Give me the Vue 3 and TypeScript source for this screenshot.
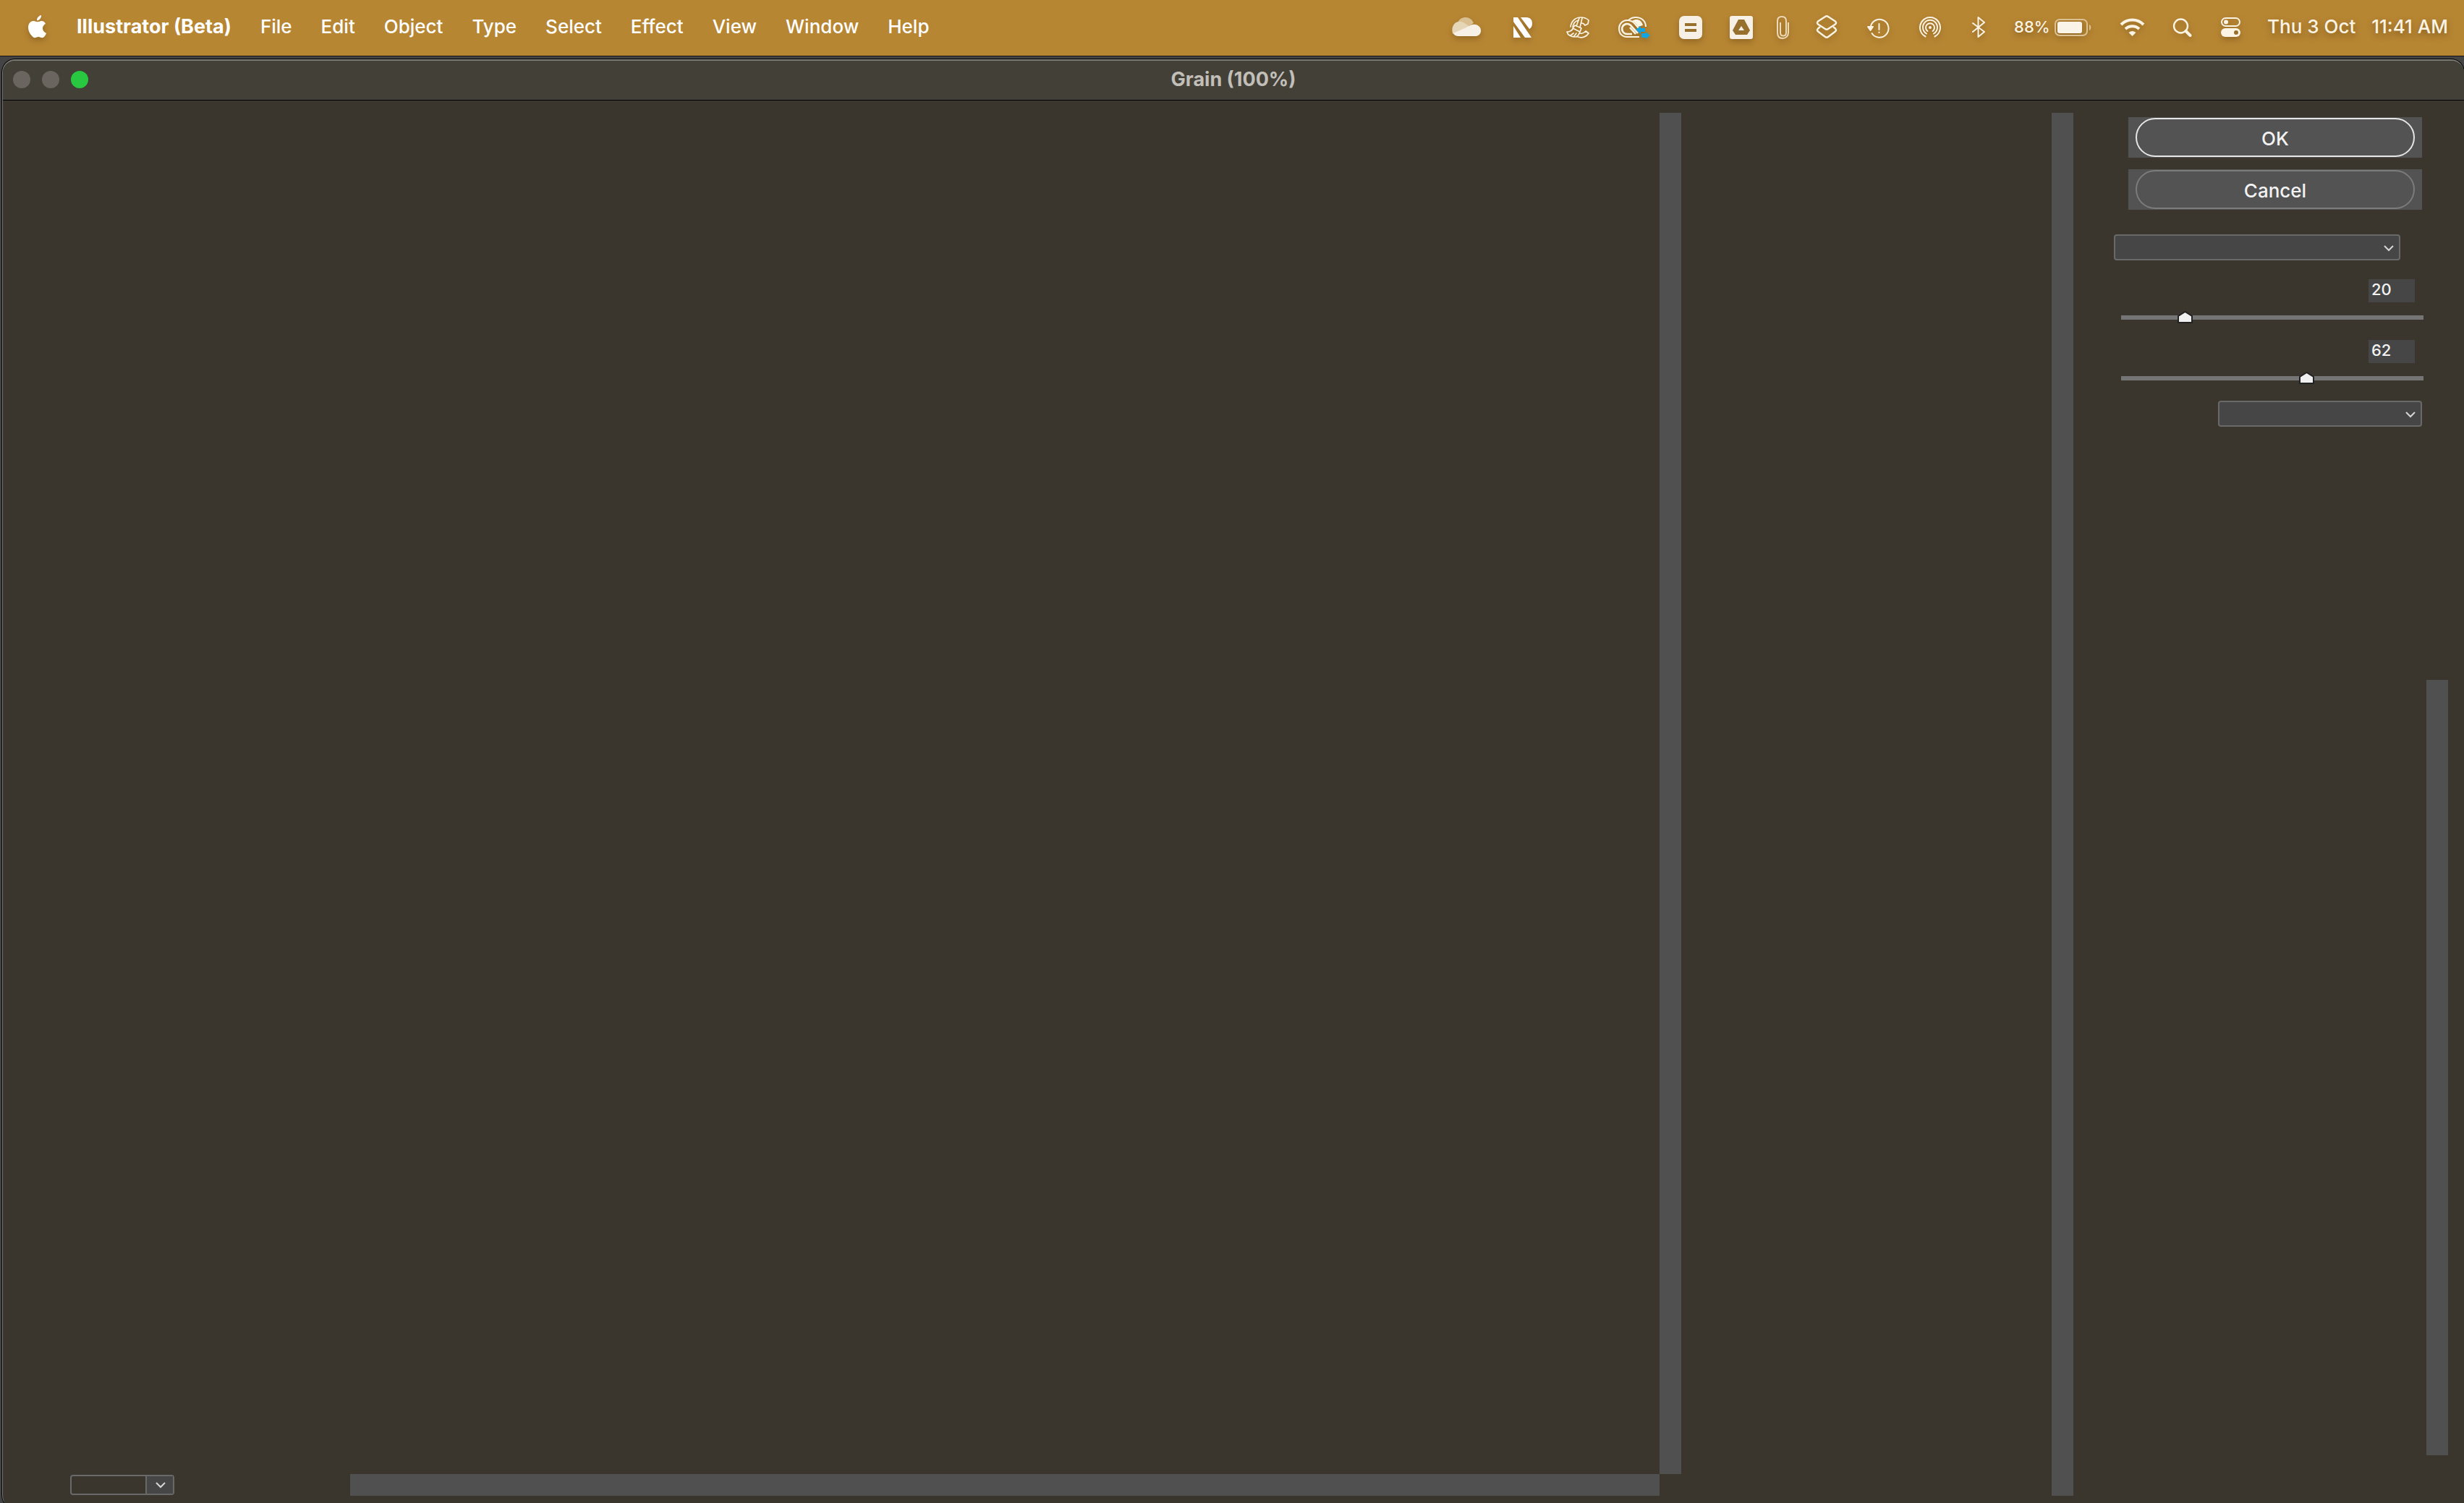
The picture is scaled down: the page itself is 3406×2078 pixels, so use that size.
<script setup lang="ts">
import { ref } from 'vue'

interface Slider {
  name: string
  value: number
}

const menus: string[] = ['File', 'Edit', 'Object', 'Type', 'Select', 'Effect', 'View', 'Window', 'Help']
const sliders = ref<Slider[]>([
  { name: 'Intensity', value: 20 },
  { name: 'Contrast', value: 62 },
])
</script>

<template>
  <div class="desktop">
    <header class="menubar">
      <nav class="menus">
        <button class="menu apple" aria-label="Apple menu">
          <svg width="28" height="40" viewBox="0 0 28 40" fill="currentColor">
            <path d="M19 4c.3 3.800-2.600 7.300-6 7.500C12.600 8 15.600 4.600 19 4z" />
            <path d="M25 15.800c-3 1.900-4.600 4.600-3.900 7.800.5 2.300 2 4 4.900 5.300-1 2.500-2.200 4.300-3.600 5.500-1.600 1.200-3.200.9-4.800.2-1.700-.8-3.300-.8-5 0-2 .9-3.600.9-5.200-.6C3.500 30.600 1.200 26.400 1 21.500c-.2-5.700 3-9.300 7.200-9.500 2.200-.1 3.900 1.300 5.500 1.300 1.700 0 3.600-1.500 6-1.300 2.300.1 4.100 1.300 5.300 3.800z" />
          </svg>
        </button>
        <button class="menu app-name">Illustrator (Beta)</button>
        <button v-for="menu in menus" :key="menu" class="menu">{{ menu }}</button>
      </nav>

      <div class="status">
        <!-- cloud storage -->
        <svg width="48" height="40" viewBox="0 0 48 40">
          <path d="M12 14C14 9.500 18 7 23 7c5 0 9 3 11 8l-8 5-14-6z" fill="#d9bf92" />
          <path d="M5 29C3 22 6 14 13 13c4-.6 7 1 10 3l7 5-24 9z" fill="#e6d6b8" />
          <path d="M6 29l19-8.500c4-3 8-4.500 12-3.500 5 1.400 7.500 5 7 9.500-.6 4-3.500 6.500-7.500 6.500H13c-3.500 0-6-1.500-7-4z" fill="#f6f0e6" />
        </svg>
        <!-- striped N -->
        <svg width="44" height="40" viewBox="0 0 44 40" fill="#fff">
          <path d="M9 7h6l19 28h-9L9 13z" />
          <path d="M9 19l10 16H9z" />
          <path d="M19 7h8c5 0 8 3.500 8 8.500 0 3.500-1.300 6-4 7.500z" />
        </svg>
        <!-- cleaner -->
        <svg width="44" height="40" viewBox="0 0 44 40" fill="none" stroke="currentColor" stroke-width="1.700" stroke-linejoin="round" stroke-linecap="round">
          <path d="M12 20C13 12 19 7 26 7c4 0 8 1 11 4l-1 5-4 2c-1-2-3-3-5-3M15 20c1-5 4-8 8-9" />
          <path d="M22 34c6 2 12 0 15-5l-4-3c-2 2-5 4-8 3" />
          <path d="M24 8l-4 11M28 8l-3 13M18 18l9 4-2 5-10-5zM15 23c-2 3-5 4-8 4 1 4 5 7 13 7 3-2 4-4 5-7M12 32l4-3M17 33l3-4" />
        </svg>
        <!-- creative cloud syncing -->
        <svg width="48" height="40" viewBox="0 0 48 40" fill="none" stroke="currentColor" stroke-width="2">
          <path d="M16 11c3-3 6-4 10-4 8 0 14 5 14 13M31 34H14C7 34 3 29 3 22.500S8 11 14 11c4 0 7 1 10 4l7 8" />
          <path d="M21 30h-7a7 7 0 1 1 5-12l10 11M26 30l-8-9" stroke-width="2.600" />
          <path d="M21 12c6-4 13-2 15 6l-7 2c-2-4-4-6-8-8z" fill="currentColor" stroke="none" />
          <g fill="#12a5e0" stroke="none">
            <path d="M26 24l7-5v3h6v5h-6v3z" />
            <path d="M46 32l-6-5v2h-6v6h6v2z" />
          </g>
        </svg>
        <!-- equals tile -->
        <svg width="44" height="40" viewBox="0 0 44 40">
          <rect x="6" y="5" width="32" height="32" rx="7" fill="#f6f0e6" />
          <path d="M14 15h16v4H14zM14 23h16v4H14z" fill="#97702e" />
        </svg>
        <!-- drive tile -->
        <svg width="32" height="40" viewBox="0 0 32 40">
          <rect x="0" y="5" width="32" height="32" rx="3" fill="#f6f0e6" />
          <path d="M12 10h8l8 15-4 6H8l-4-6z" fill="#97702e" />
          <path d="M16 19l4 6h-8z" fill="#f6f0e6" />
        </svg>
        <!-- paperclip -->
        <svg width="23" height="40" viewBox="0 0 23 40" fill="none" stroke="#ecd9b6" stroke-width="2">
          <path d="M17 14v14c0 5-3.500 8-8 8s-7-3-7-8V12c0-4 2.500-6 6-6s6 2 6 6v16c0 3-1.500 4.500-4 4.500S6 31 6 28V14" />
        </svg>
        <!-- stacked layers -->
        <svg width="30" height="40" viewBox="0 0 30 40" fill="none" stroke="currentColor" stroke-width="2.400" stroke-linejoin="round">
          <path d="M13 6Q15 4.500 17 6l10 6.500q2 2 0 4L17 23q-2 1.500-4 0L3 16.500q-2-2 0-4z" />
          <path d="M6 20l-3 2.500q-2 2 0 4l10 7.500q2 1.500 4 0l10-7.500q2-2 0-4L24 20" />
        </svg>
        <!-- backup alert -->
        <svg width="47" height="40" viewBox="0 0 47 40" fill="none" stroke="currentColor" stroke-width="2" stroke-linecap="round">
          <path d="M14 19A12.500 12.500 0 1 1 15.500 29" />
          <path d="M25.500 16v8M25.500 27.500v.5" />
          <path d="M10 20h7l-3.500 5z" fill="currentColor" stroke-linejoin="round" />
        </svg>
        <!-- airdrop -->
        <svg width="34" height="40" viewBox="0 0 34 40" fill="none" stroke="currentColor" stroke-width="2" stroke-linecap="round">
          <path d="M10.500 33.500a14 14 0 1 1 13 0M12 29.500a10 10 0 1 1 10 0M13.500 26a6 6 0 1 1 7 0" />
          <circle cx="17" cy="21" r="2" fill="currentColor" stroke="none" />
        </svg>
        <!-- bluetooth -->
        <svg width="35" height="40" viewBox="0 0 35 40" fill="none" stroke="currentColor" stroke-width="2" stroke-linecap="round" stroke-linejoin="round">
          <path d="M10 15l16 12-8.500 7V7l8.500 7-16 13" />
        </svg>
        <div class="battery">
          <span class="percent">88%</span>
          <svg width="57" height="40" viewBox="0 0 57 40">
            <rect x="3" y="10" width="44" height="22" rx="6" fill="none" stroke="#dcc192" stroke-width="2" />
            <rect x="6" y="13" width="34" height="16" rx="3" fill="#f9f3e8" />
            <path d="M50 17c3 1 3 7 0 8z" fill="#dcc192" />
          </svg>
        </div>
        <!-- wifi -->
        <svg width="41" height="40" viewBox="0 0 41 40" fill="none" stroke="currentColor" stroke-width="4">
          <path d="M5 17a22 22 0 0 1 31 0M11 23a14 14 0 0 1 19 0" />
          <path d="M15.500 28q5-4 10 0l-5 5z" fill="currentColor" stroke="none" />
        </svg>
        <!-- search -->
        <svg width="33" height="40" viewBox="0 0 33 40" fill="none" stroke="currentColor" stroke-linecap="round">
          <circle cx="14.500" cy="19" r="9.500" stroke-width="2.400" />
          <path d="M21.500 26l6 6" stroke-width="4" />
        </svg>
        <!-- control centre -->
        <svg width="37" height="40" viewBox="0 0 37 40">
          <rect x="6" y="8" width="25" height="11" rx="5.500" fill="none" stroke="currentColor" stroke-width="2" />
          <circle cx="12" cy="13.500" r="3" fill="currentColor" />
          <rect x="5" y="22" width="27" height="12" rx="6" fill="currentColor" />
          <circle cx="26" cy="28" r="3" fill="#97702e" />
        </svg>
        <time class="clock"><span>Thu 3 Oct</span><span>11:41 AM</span></time>
      </div>
    </header>

    <div class="shell">
      <main class="window">
        <div class="titlebar">
          <div class="lights">
            <button class="light" aria-label="Close"></button>
            <button class="light" aria-label="Minimise"></button>
            <button class="light zoom" aria-label="Zoom"></button>
          </div>
          <h1 class="title">Grain (100%)</h1>
        </div>

        <div class="content">
          <section class="preview">
            <div class="canvas"></div>
            <div class="scrollbar"></div>
            <div class="preview-footer">
              <div class="picker zoom-picker">
                <select aria-label="Zoom level"></select>
                <span class="zoom-arrow"></span>
                <svg class="chevron" viewBox="0 0 14 9"><path d="M1 1l6 6 6-6" /></svg>
              </div>
              <div class="scrollbar across"></div>
            </div>
          </section>

          <section class="filters">
            <div class="scrollbar"></div>
          </section>

          <aside class="settings">
            <div class="actions">
              <button class="action primary"><span class="pill">OK</span></button>
              <button class="action"><span class="pill">Cancel</span></button>
            </div>
            <div class="picker effect-picker">
              <select aria-label="Effect"></select>
              <svg class="chevron" viewBox="0 0 14 9"><path d="M1 1l6 6 6-6" /></svg>
            </div>
            <div v-for="slider in sliders" :key="slider.name" class="slider">
              <input v-model.number="slider.value" class="amount" type="text" :aria-label="slider.name + ' value'" />
              <input v-model.number="slider.value" class="range" type="range" min="0" max="100" :aria-label="slider.name" />
            </div>
            <div class="picker grain-picker">
              <select aria-label="Grain type"></select>
              <svg class="chevron" viewBox="0 0 14 9"><path d="M1 1l6 6 6-6" /></svg>
            </div>
            <div class="scrollbar layers-scroll"></div>
          </aside>
        </div>
      </main>
    </div>
  </div>
</template>

<style>
body {
  margin: 0;
  background: #3a352d;
}
</style>

<style scoped>
.desktop {
  display: flex;
  flex-direction: column;
  min-height: 100vh;
  font-family: Inter, "Liberation Sans", sans-serif;
  font-size: 26px;
  font-weight: 500;
  line-height: 32px;
  color: #fbf3e4;
}
.desktop * {
  box-sizing: border-box;
}
button,
input,
select {
  margin: 0;
  padding: 0;
  border: 0;
  font: inherit;
  color: inherit;
  background: none;
}
svg {
  display: block;
  flex: none;
}

/* menu bar */
.menubar {
  display: flex;
  align-items: center;
  justify-content: space-between;
  height: 77px;
  padding: 0 22px 3px 38px;
  background: #b78633;
}
.menus {
  display: flex;
  align-items: center;
  gap: 40px;
  color: #fff;
  text-shadow: 0 4px 8px rgba(80, 50, 10, 0.5);
}
.menu {
  white-space: nowrap;
}
.app-name {
  font-size: 27px;
  font-weight: 700;
}
.menubar svg {
  filter: drop-shadow(0 4px 4px rgba(80, 50, 10, 0.35));
}
.status {
  display: flex;
  align-items: center;
  gap: 32px;
}
.battery {
  display: flex;
  align-items: center;
}
.percent {
  width: 54px;
  font-size: 22px;
  text-shadow: 0 4px 8px rgba(80, 50, 10, 0.5);
}
.clock {
  display: flex;
  gap: 22px;
  white-space: nowrap;
  text-shadow: 0 4px 8px rgba(80, 50, 10, 0.5);
}

/* window */
.shell {
  display: flex;
  flex: 1;
  padding: 4px 0 0 3px;
  border-top: 1px solid #111;
  background: #454444;
}
.window {
  display: flex;
  flex: 1;
  flex-direction: column;
  overflow: hidden;
  border-top: 2px solid #7c7a74;
  border-left: 1px solid #7c7a74;
  border-radius: 18px 18px 0 5px / 18px 18px 0 12px;
  box-shadow: 0 0 0 1px #000;
  background: #3a352d;
}
.titlebar {
  display: grid;
  grid-template-columns: 1fr auto 1fr;
  align-items: center;
  height: 55px;
  padding: 0 14px 2px;
  border-bottom: 1px solid #000;
  background: #434038;
}
.lights {
  display: flex;
  gap: 16px;
}
.light {
  width: 24px;
  height: 24px;
  border-radius: 50%;
  background: #6a665f;
}
.light.zoom {
  background: #28c840;
}
.title {
  margin: 0;
  font-size: 27px;
  font-weight: 700;
  color: #c2bfb9;
}
.content {
  display: flex;
  flex: 1;
  padding: 17px 0 10px;
}
.scrollbar {
  width: 30px;
  background: #505050;
}
.preview {
  display: grid;
  flex: 1;
  grid-template-columns: 1fr 30px;
  grid-template-rows: 1fr 30px;
}
.preview-footer {
  display: flex;
  align-items: center;
  padding-left: 93px;
}
.across {
  flex: 1;
  height: 30px;
  margin-left: 243px;
}
.filters {
  display: flex;
  justify-content: flex-end;
  width: 542px;
}

/* settings */
.settings {
  display: flex;
  flex-direction: column;
  width: 540px;
  padding: 6px 58px 56px 56px;
}
.actions {
  display: flex;
  flex-direction: column;
  gap: 16px;
  padding-left: 20px;
}
.action {
  height: 56px;
  padding: 1px 10px;
  background: #535353;
  color: #f2f2f2;
}
.pill {
  display: flex;
  align-items: center;
  justify-content: center;
  height: 54px;
  padding-top: 3px;
  border: 2px solid #7c7c7c;
  border-radius: 27px;
}
.primary .pill {
  border-color: #e6e6e6;
}
.picker {
  position: relative;
  height: 36px;
}
.picker select {
  display: block;
  width: 100%;
  height: 100%;
  appearance: none;
  border: 2px solid #696969;
  border-radius: 4px;
  background: #464646;
}
.chevron {
  position: absolute;
  top: 15px;
  right: 9px;
  width: 14px;
  height: 9px;
  fill: none;
  stroke: #d6d6d6;
  stroke-width: 2;
  pointer-events: none;
}
.effect-picker {
  width: 396px;
  margin: 34px 0 26px;
}
.zoom-picker {
  width: 144px;
  height: 28px;
}
.zoom-picker select {
  background: transparent;
}
.zoom-arrow {
  position: absolute;
  top: 2px;
  right: 2px;
  bottom: 2px;
  width: 38px;
  border-left: 2px solid #696969;
  background: #464646;
  pointer-events: none;
}
.zoom-picker .chevron {
  top: 10px;
  right: 12px;
}
.slider {
  display: flex;
  flex-direction: column;
  gap: 12px;
  margin-bottom: 22px;
}
.amount {
  align-self: flex-end;
  width: 64px;
  height: 32px;
  margin-right: 10px;
  padding: 0 4px 4px;
  background: #464646;
  color: #f2f2f2;
  font-size: 22px;
}
.range {
  width: 421px;
  height: 18px;
  margin-left: 8px;
  appearance: none;
  background: linear-gradient(#757575, #757575) center / 418px 6px no-repeat;
}
.range::-webkit-slider-thumb {
  width: 21px;
  height: 18px;
  appearance: none;
  background: url("data:image/svg+xml,%3Csvg xmlns='http://www.w3.org/2000/svg' width='21' height='18'%3E%3Cpath d='M1 7L10.5 1 20 7v9H1z' fill='%23f0f0f0' stroke='%23222' stroke-width='2'/%3E%3C/svg%3E") no-repeat;
}
.grain-picker {
  align-self: flex-end;
  width: 282px;
}
.layers-scroll {
  flex: 1;
  align-self: flex-end;
  margin: 350px -36px 0 0;
}
</style>
